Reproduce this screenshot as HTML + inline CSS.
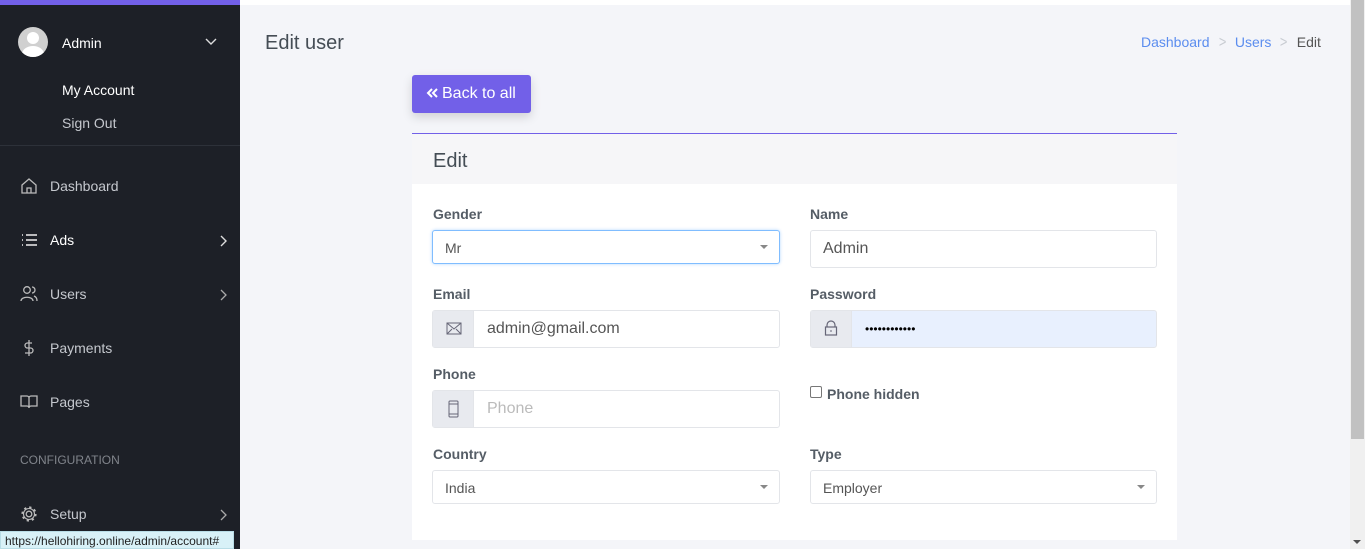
<!DOCTYPE html>
<html><head><style>
*{box-sizing:border-box;margin:0;padding:0}
body{width:1365px;height:549px;overflow:hidden;font-family:"Liberation Sans",sans-serif;background:#f4f5f9;position:relative}
.sb{position:absolute;left:0;top:0;width:240px;height:549px;background:#1d2027;color:#c9ccd2}
.sb .top{height:5px;background:#7260e8}
.av{position:absolute;left:18px;top:27px;width:30px;height:30px;border-radius:50%;background:#d0d0d0;overflow:hidden}
.av:before{content:"";position:absolute;left:9px;top:5px;width:12px;height:12px;border-radius:50%;background:#fff}
.av:after{content:"";position:absolute;left:4px;top:19px;width:22px;height:16px;border-radius:50%;background:#fff}
.t{position:absolute;font-size:14px}
.nav{position:absolute;left:20px;font-size:14px;color:#c5c8ce}
.nav svg{position:absolute;left:0;top:-1px}
.nav span{position:absolute;left:30px;top:0;white-space:nowrap}
.chev{position:absolute;left:219px}
.main{position:absolute;left:240px;top:0;width:1110px;height:549px}
.strip{position:absolute;left:0;top:0;width:1110px;height:5px;background:#fff}
.scroll{position:absolute;left:1350px;top:0;width:15px;height:549px;background:#f0f0f0}
.thumb{position:absolute;left:1px;top:0;width:13px;height:439px;background:#c1c1c1}
.card{position:absolute;left:412px;top:133px;width:765px;height:407px;background:#fff}
.ch{height:51px;background:#f6f6f8;font-size:20px;color:#444d55;padding:16px 21px;border-top:1px solid #7260e8}
.lbl{position:absolute;font-size:14px;font-weight:bold;color:#555d66}
.in{position:absolute;height:38px;border:1px solid #e3e5e9;border-radius:3px;background:#fff;font-size:16px;color:#555;padding:9px 12px}
.sel{height:34px;font-size:14px;padding:9px 12px}
.sel:after{content:"";position:absolute;right:11px;top:14px;border:4px solid transparent;border-top:4px solid #888}
.ig{position:absolute;left:0;top:0;width:41px;height:36px;background:#e8eaef;border-right:1px solid #e3e5e9}
.bc{color:#c8ccd2;display:inline-block;margin:0 8px;font-size:16px;transform:scaleX(.8)}
</style></head><body>
<div class="sb">
<div class="top"></div>
<div class="av"></div>
<div class="t" style="left:62px;top:35px;color:#fff">Admin</div>
<svg style="position:absolute;left:205px;top:38px" width="12" height="8"><path d="M1 1l5 5 5-5" stroke="#ddd" stroke-width="1.4" fill="none"/></svg>
<div class="t" style="left:62px;top:82px;color:#fff">My Account</div>
<div class="t" style="left:62px;top:115px;color:#c5c8ce">Sign Out</div>
<div style="position:absolute;left:0;top:145px;width:240px;height:1px;background:#2d3139"></div>
<div class="nav" style="top:178px"><svg width="18" height="18" viewBox="0 0 18 18"><path d="M2 8L9 2l7 6v8H2z M7 16v-5h4v5" stroke="#bbb" stroke-width="1.3" fill="none"/></svg><span>Dashboard</span></div>
<div class="nav" style="top:232px;color:#fff"><svg width="18" height="18"><path d="M2 4h1M2 9h1M2 14h1M6 4h11M6 9h11M6 14h11" stroke="#eee" stroke-width="1.5"/></svg><span>Ads</span></div>
<svg class="chev" style="top:235px" width="8" height="12"><path d="M2 1l5 5-5 5" stroke="#ddd" stroke-width="1.4" fill="none"/></svg>
<div class="nav" style="top:286px"><svg width="18" height="18"><circle cx="7" cy="5" r="3.3" stroke="#bbb" stroke-width="1.3" fill="none"/><path d="M1 16c0-5 12-5 12 0M12 2a3 3 0 010 6M14 11c2 1 3 2 3 5" stroke="#bbb" stroke-width="1.3" fill="none"/></svg><span>Users</span></div>
<svg class="chev" style="top:289px" width="8" height="12"><path d="M2 1l5 5-5 5" stroke="#aaa" stroke-width="1.3" fill="none"/></svg>
<div class="nav" style="top:340px"><svg width="18" height="18"><path d="M12 4H7.5a2.5 2.5 0 000 5h3a2.5 2.5 0 010 5H5M9 1v16" stroke="#bbb" stroke-width="1.3" fill="none"/></svg><span>Payments</span></div>
<div class="nav" style="top:394px"><svg width="18" height="18"><path d="M1 3h6a2 2 0 012 2v10a2 2 0 00-2-2H1zM17 3h-6a2 2 0 00-2 2v10a2 2 0 012-2h6z" stroke="#bbb" stroke-width="1.3" fill="none"/></svg><span>Pages</span></div>
<div class="t" style="left:20px;top:453px;font-size:12px;color:#80848b">CONFIGURATION</div>
<div class="nav" style="top:506px"><svg width="18" height="18"><circle cx="9" cy="9" r="2.8" stroke="#bbb" stroke-width="1.3" fill="none"/><circle cx="9" cy="9" r="6.5" stroke="#bbb" stroke-width="2.2" stroke-dasharray="2.2 2.9" fill="none"/><circle cx="9" cy="9" r="5.5" stroke="#bbb" stroke-width="1.1" fill="none"/></svg><span>Setup</span></div>
<svg class="chev" style="top:509px" width="8" height="12"><path d="M2 1l5 5-5 5" stroke="#aaa" stroke-width="1.3" fill="none"/></svg>
</div>
<div style="position:absolute;left:0;top:531px;width:234px;height:18px;background:#d8f1f7;border:1px solid #b9dde6;font-size:12px;color:#222;padding:2px 4px;white-space:nowrap">https://hellohiring.online/admin/account#</div>
<div class="strip" style="left:240px"></div>
<div class="t" style="left:265px;top:32px;font-size:20px;color:#454d55">Edit user</div>
<div class="t" style="left:1141px;top:34px;color:#5b8def;white-space:nowrap">Dashboard<span class="bc">&gt;</span>Users<span class="bc">&gt;</span><span style="color:#555">Edit</span></div>
<div style="position:absolute;left:412px;top:75px;width:119px;height:38px;background:#7260e8;border-radius:3px;color:#fff;font-size:16px;padding:10px 14px;box-shadow:0 4px 10px rgba(0,0,0,.15)"><svg width="12" height="10" style="margin-right:4px"><path d="M6 1L2 5l4 4M11 1L7 5l4 4" stroke="#fff" stroke-width="2" fill="none"/></svg>Back to all</div>
<div class="card">
<div class="ch">Edit</div>
<div class="lbl" style="left:21px;top:73px">Gender</div>
<div class="in sel" style="left:20px;top:97px;width:348px;border-color:#80bdff;box-shadow:0 0 3px rgba(0,123,255,.3)">Mr</div>
<div class="lbl" style="left:398px;top:73px">Name</div>
<div class="in" style="left:398px;top:97px;width:347px">Admin</div>
<div class="lbl" style="left:21px;top:153px">Email</div>
<div class="in" style="left:20px;top:177px;width:348px;padding-left:54px"><div class="ig"><svg style="position:absolute;left:13px;top:11px" width="16" height="13"><rect x="1" y="1" width="14" height="11" stroke="#667" fill="none"/><path d="M1 1l7 6 7-6M1 12l5-5M15 12l-5-5" stroke="#667" fill="none"/></svg></div>admin@gmail.com</div>
<div class="lbl" style="left:398px;top:153px">Password</div>
<div class="in" style="left:398px;top:177px;width:347px;background:#e8f0fe;padding-left:54px;font-size:12px;padding-top:11px;color:#000"><div class="ig"><svg style="position:absolute;left:13px;top:9px" width="14" height="16"><path d="M3 7V5a4 4 0 018 0v2" stroke="#667" fill="none" stroke-width="1.2"/><rect x="1.5" y="7" width="11" height="8" stroke="#667" fill="none" stroke-width="1.2"/><path d="M7 10v2" stroke="#667"/></svg></div>&#8226;&#8226;&#8226;&#8226;&#8226;&#8226;&#8226;&#8226;&#8226;&#8226;&#8226;&#8226;</div>
<div class="lbl" style="left:21px;top:233px">Phone</div>
<div class="in" style="left:20px;top:257px;width:348px;padding-left:54px;color:#bbb"><div class="ig"><svg style="position:absolute;left:15px;top:9px" width="12" height="18"><rect x="1" y="1" width="9" height="16" rx="1" stroke="#667" fill="none"/><path d="M1 4h9M1 14h9" stroke="#667"/></svg></div>Phone</div>
<div style="position:absolute;left:398px;top:253px;width:12px;height:12px;border:1px solid #777;border-radius:2px"></div>
<div class="lbl" style="left:415px;top:253px">Phone hidden</div>
<div class="lbl" style="left:21px;top:313px">Country</div>
<div class="in sel" style="left:20px;top:337px;width:348px">India</div>
<div class="lbl" style="left:398px;top:313px">Type</div>
<div class="in sel" style="left:398px;top:337px;width:347px">Employer</div>
</div>
<div class="scroll"><div class="thumb"></div><div style="position:absolute;left:3px;top:540px;border:4px solid transparent;border-top:4px solid #505050"></div></div>
</body></html>
